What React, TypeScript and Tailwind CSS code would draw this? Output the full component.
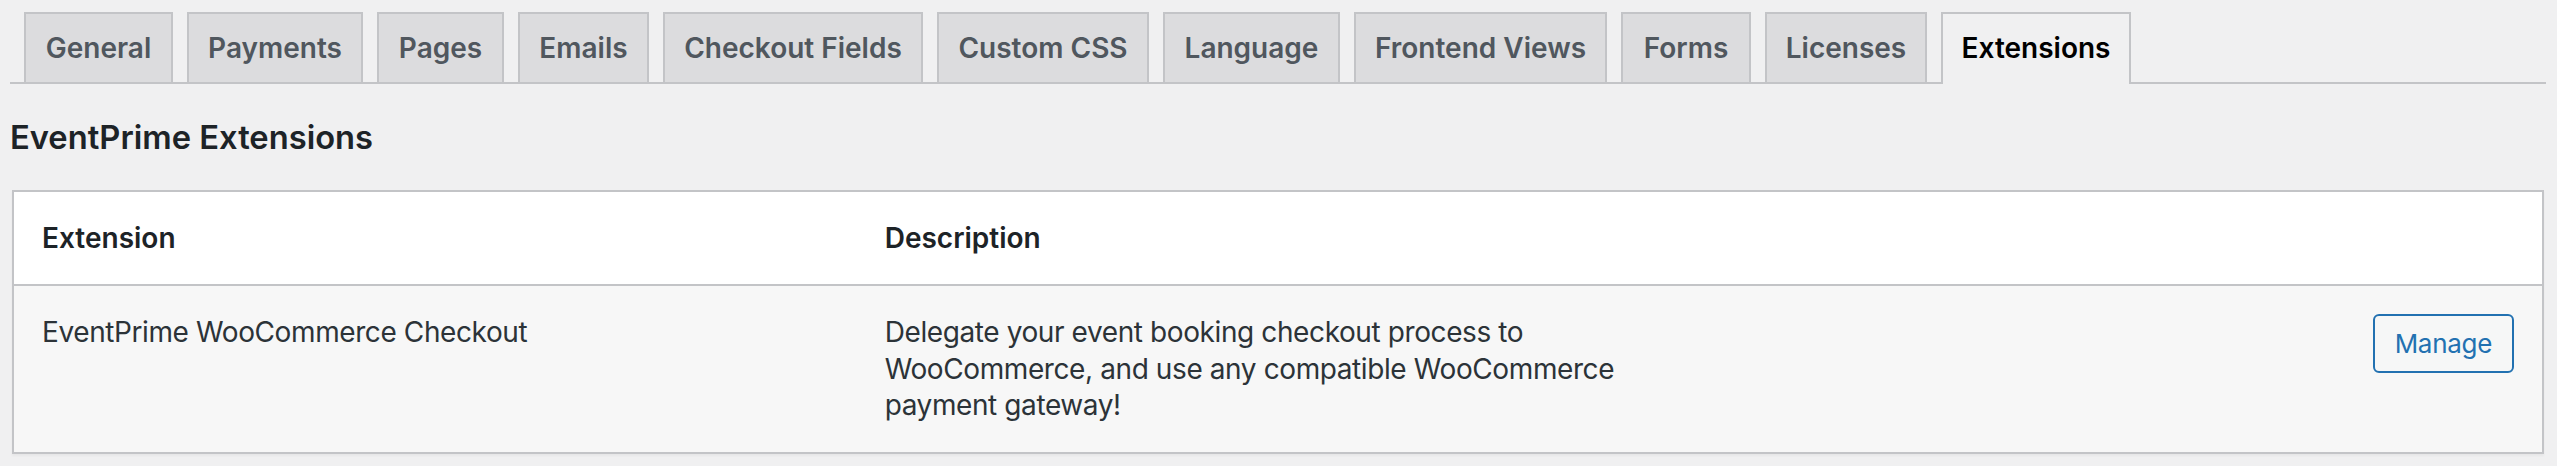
const TABS: { label: string; width: string; active?: boolean }[] = [
  { label: "General", width: "w-[149px]" },
  { label: "Payments", width: "w-[176px]" },
  { label: "Pages", width: "w-[127px]" },
  { label: "Emails", width: "w-[131px]" },
  { label: "Checkout Fields", width: "w-[260px]" },
  { label: "Custom CSS", width: "w-[212px]" },
  { label: "Language", width: "w-[177px]" },
  { label: "Frontend Views", width: "w-[253px]" },
  { label: "Forms", width: "w-[130px]" },
  { label: "Licenses", width: "w-[162px]" },
  { label: "Extensions", width: "w-[190px]", active: true },
];

const EXTENSIONS = [
  {
    name: "EventPrime WooCommerce Checkout",
    description:
      "Delegate your event booking checkout process to WooCommerce, and use any compatible WooCommerce payment gateway!",
  },
];

function NavTabs() {
  return (
    <nav className="flex items-end border-b-2 border-[#c3c4c7] pt-[12px]">
      {TABS.map((tab) =>
        tab.active ? (
          <a
            key={tab.label}
            href="#"
            className={`${tab.width} ml-[14px] -mb-[2px] flex h-[72px] justify-center border-2 border-b-0 border-[#c3c4c7] bg-[#f0f0f1] pt-[10px] text-[28px] leading-[48px] font-semibold text-black`}
          >
            {tab.label}
          </a>
        ) : (
          <a
            key={tab.label}
            href="#"
            className={`${tab.width} ml-[14px] flex h-[70px] justify-center border-2 border-b-0 border-[#c3c4c7] bg-[#dcdcde] pt-[10px] text-[28px] leading-[48px] font-semibold text-[#50575e]`}
          >
            {tab.label}
          </a>
        ),
      )}
    </nav>
  );
}

export default function App() {
  return (
    <div className="min-h-[466px] bg-[#f0f0f1] font-['Inter',sans-serif]">
      <div className="pl-[10px] pr-[11px]">
        <NavTabs />

        <h2 className="mt-[33px] mb-[33px] text-[32.7px] leading-[40px] font-semibold text-[#1d2327]">
          EventPrime Extensions
        </h2>

        <div className="mx-[2px]">
          <table className="w-full table-fixed border-separate border-spacing-0 border-2 border-[#c3c4c7] bg-white text-left shadow-[0_2px_2px_rgba(0,0,0,0.04)]">
            <thead>
              <tr>
                <th className="w-1/3 border-b-2 border-[#c3c4c7] p-[28px] text-[28px] leading-[36.4px] font-semibold text-[#1d2327]">
                  Extension
                </th>
                <th className="w-1/3 border-b-2 border-[#c3c4c7] p-[28px] text-[28px] leading-[36.4px] font-semibold text-[#1d2327]">
                  Description
                </th>
                <th className="border-b-2 border-[#c3c4c7] p-[28px]" />
              </tr>
            </thead>
            <tbody>
              {EXTENSIONS.map((ext) => (
                <tr key={ext.name} className="bg-[#f7f7f7]">
                  <td className="p-[28px] align-top text-[28px] leading-[36.4px] tracking-[-0.4px] text-[#2c3338]">
                    {ext.name}
                  </td>
                  <td className="p-[28px] align-top text-[28px] leading-[36.4px] tracking-[-0.4px] text-[#2c3338]">
                    {ext.description}
                  </td>
                  <td className="p-[28px] align-top">
                    <div className="flex justify-end">
                      <button
                        type="button"
                        className="h-[59px] rounded-[6px] border-2 border-[#2271b1] bg-[#f6f7f7] px-[20px] text-[26px] leading-[55px] tracking-[-0.3px] text-[#2271b1]"
                      >
                        Manage
                      </button>
                    </div>
                  </td>
                </tr>
              ))}
            </tbody>
          </table>
        </div>
      </div>
    </div>
  );
}
